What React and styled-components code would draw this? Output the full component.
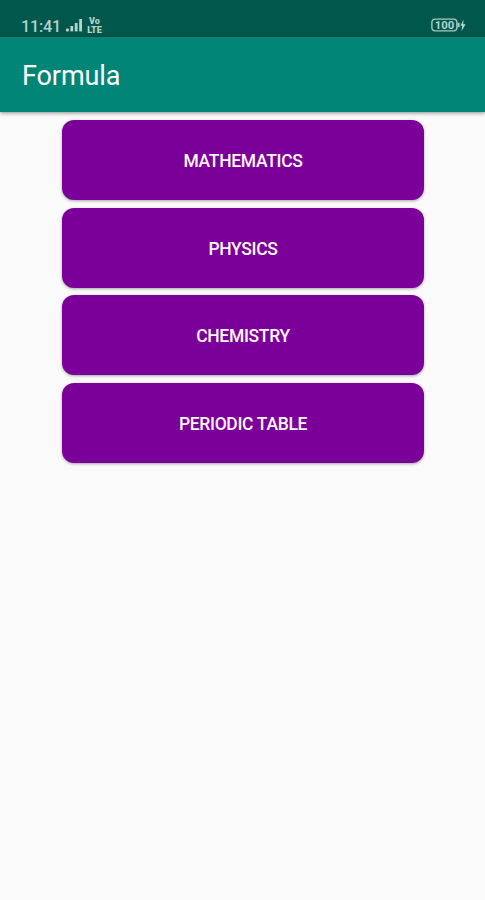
import React from "react";
import styled, { createGlobalStyle } from "styled-components";


const SUBJECTS = ["MATHEMATICS", "PHYSICS", "CHEMISTRY", "PERIODIC TABLE"];


const GlobalStyle = createGlobalStyle`
  body {
    margin: 0;
    background: #fafafa;
    font-family: Roboto, "Liberation Sans", sans-serif;
  }
`;


const SignalIcon = () => (
  <svg width="17" height="15" viewBox="0 0 17 15" fill="#b5d2cd">
    <rect x="0" y="10.6" width="2.8" height="2.8" />
    <rect x="4.4" y="8" width="2.8" height="5.4" />
    <rect x="8.8" y="5" width="2.8" height="8.4" />
    <rect x="13.2" y="1" width="2.8" height="12.4" />
  </svg>
)

const BatteryIcon = () => (
  <svg width="36" height="16" viewBox="0 0 36 16">
    <rect x="0.9" y="2.1" width="25" height="11.8" rx="3.4" fill="none" stroke="#a9c9c4" strokeWidth="1.4" />
    <rect x="26.4" y="5.8" width="2.2" height="4.4" fill="#a9c9c4" />
    <path d="M32.6 2.6L29.4 8.7H31.2L30.6 14L34.6 7.2H32.2Z" fill="#b5d2cd" />
    <text x="13.4" y="12" textAnchor="middle" textLength="19.5" lengthAdjust="spacingAndGlyphs" fontSize="11.3" fontWeight="700" fill="#b5d2cd">100</text>
  </svg>
)


const App = () => {

  return(
    <Screen>
      <GlobalStyle />
      <StatusBar>
        <StatusGroup>
          <Clock>11:41</Clock>
          <SignalIcon />
          <Volte>
            <span>Vo</span>
            <span>LTE</span>
          </Volte>
        </StatusGroup>
        <BatteryIcon />
      </StatusBar>
      <AppBar>
        <Title>Formula</Title>
      </AppBar>
      <SubjectList>
        {SUBJECTS.map((subject) => (
          <SubjectButton key={subject}>{subject}</SubjectButton>
        ))}
      </SubjectList>
    </Screen>
  )
}


const Screen = styled.div`
  min-height: 100vh;
  background: #fafafa;
`;

const StatusBar = styled.div`
  display: flex;
  justify-content: space-between;
  align-items: flex-end;
  box-sizing: border-box;
  height: 37px;
  padding: 0 18px 4px 21px;
  background: #00574b;
`;

const StatusGroup = styled.div`
  display: flex;
  align-items: flex-end;
`;

const Clock = styled.div`
  width: 45px;
  margin-bottom: -1px;
  font-size: 16.2px;
  font-weight: 500;
  line-height: 15px;
  letter-spacing: -0.2px;
  color: #b5d2cd;
`;

const Volte = styled.div`
  display: flex;
  flex-direction: column;
  align-items: center;
  width: 17px;
  margin: 0 0 -2px 3px;
  font-size: 9px;
  font-weight: 900;
  line-height: 9px;
  color: #b5d2cd;
`;

const AppBar = styled.div`
  display: flex;
  align-items: center;
  box-sizing: border-box;
  height: 75px;
  padding: 3px 22px 0;
  background: #008577;
  box-shadow: 0 1px 4px rgba(0, 0, 0, 0.45);
`;

const Title = styled.div`
  font-size: 27px;
  line-height: 32px;
  letter-spacing: -0.1px;
  color: #fff;
`;

const SubjectList = styled.div`
  display: flex;
  flex-direction: column;
  align-items: center;
  gap: 7.7px;
  padding-top: 8px;
`;

const SubjectButton = styled.button`
  width: 362px;
  height: 80px;
  padding: 2px 0 0 1px;
  border: none;
  border-radius: 12px;
  background: #7b0099;
  box-shadow: 0 1px 3px rgba(0, 0, 0, 0.35);
  font-family: inherit;
  font-size: 17.5px;
  font-weight: 500;
  letter-spacing: -0.32px;
  color: #fdf6ff;
`;


export default App
